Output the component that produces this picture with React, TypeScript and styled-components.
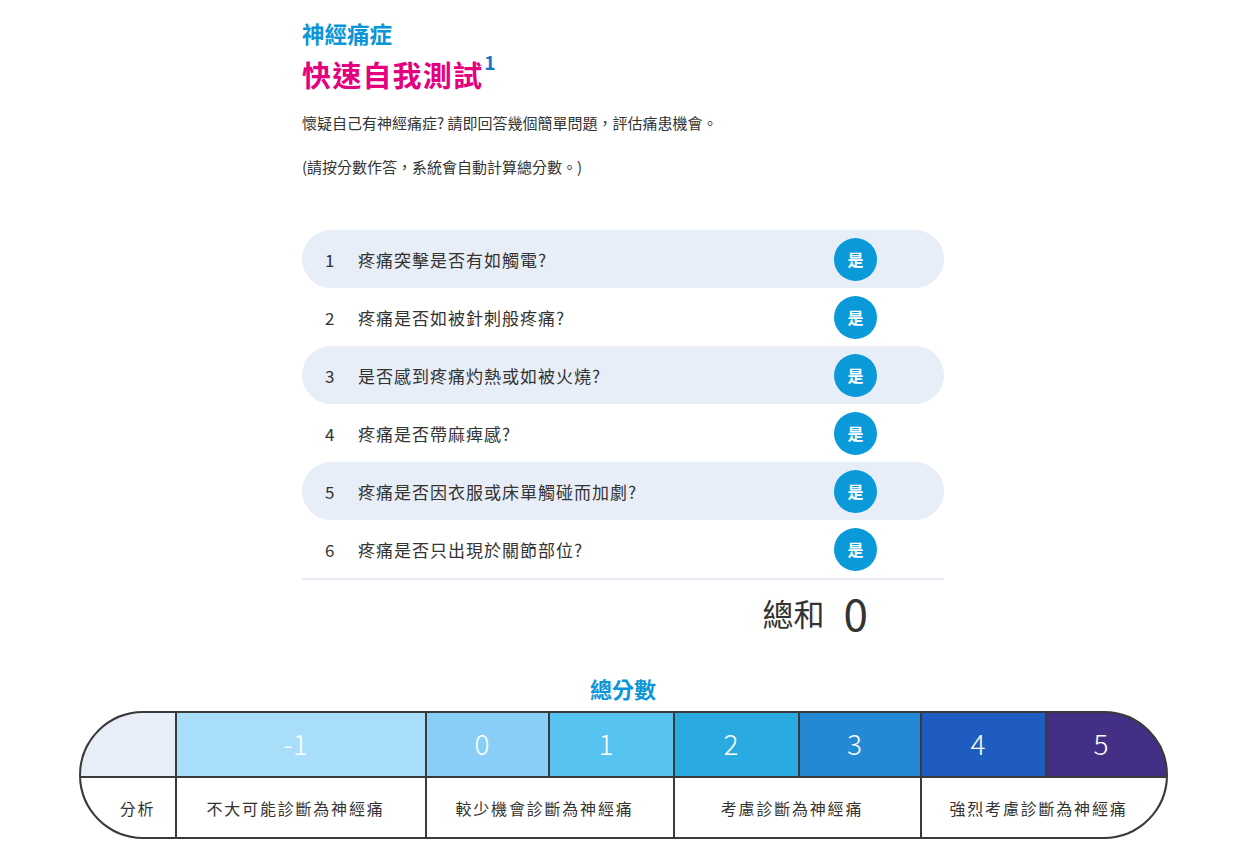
import React from "react";
import styled, { createGlobalStyle } from "styled-components";

const GlobalStyle = createGlobalStyle`
  html, body {
    margin: 0;
    padding: 0;
    background: #ffffff;
  }
  body {
    font-family: "Noto Sans CJK TC", "Noto Sans", sans-serif;
    color: #333333;
  }
`;

const Page = styled.div`
  width: 1246px;
  padding-top: 18px;
  padding-bottom: 27px;
`;

const Column = styled.div`
  width: 642px;
  margin: 0 auto;
`;

const Kicker = styled.div`
  font-size: 22.5px;
  line-height: 30px;
  font-weight: 700;
  color: #0a96d8;
`;

const Title = styled.h1`
  margin: 6px 0 0;
  font-size: 29px;
  line-height: 40px;
  font-weight: 700;
  color: #e5007f;
  letter-spacing: 1.2px;

  sup {
    font-size: 19px;
    color: #1b74c5;
    vertical-align: 17px;
    line-height: 0;
    margin-left: 1px;
  }
`;

const Para = styled.p<{ $gap: number }>`
  margin: ${(p) => p.$gap}px 0 0;
  font-size: 15px;
  line-height: 22px;
  color: #333333;
`;

const Questions = styled.div`
  margin-top: 52px;
  border-bottom: 2px solid #e6ebf4;
`;

const Row = styled.div<{ $shaded: boolean }>`
  display: flex;
  align-items: center;
  height: 58px;
  padding: 0 67px 0 23px;
  border-radius: 29px;
  background: ${(p) => (p.$shaded ? "#e8eef7" : "transparent")};
  font-size: 17px;
`;

const Num = styled.span`
  width: 33px;
`;

const Question = styled.span`
  flex: 1;
  letter-spacing: 1px;
`;

const YesButton = styled.button`
  width: 43px;
  height: 43px;
  border: none;
  border-radius: 50%;
  background: #0a9ad9;
  color: #ffffff;
  font-family: inherit;
  font-size: 16px;
  font-weight: 700;
  padding: 0;
  cursor: pointer;
`;

const Total = styled.div`
  display: flex;
  align-items: center;
  justify-content: flex-end;
  gap: 19px;
  height: 64px;
  padding-right: 76px;
`;

const TotalLabel = styled.span`
  font-size: 31px;
  color: #333333;
`;

const TotalValue = styled.span`
  font-size: 44px;
  font-weight: 400;
  line-height: 1;
  color: #333333;
`;

const ScoreHeading = styled.div`
  margin-top: 30px;
  text-align: center;
  font-size: 22px;
  line-height: 28px;
  font-weight: 700;
  color: #0a96d8;
`;

const ScoreTable = styled.div`
  margin: 9px auto 0;
  width: 1089px;
  box-sizing: border-box;
  display: grid;
  grid-template-columns: 94px 248px 121px 123px 123px 120px 123px 119px;
  grid-template-rows: 63px 59px;
  gap: 2px;
  border: 2px solid #3a3a3a;
  background: #3a3a3a;
  border-radius: 64px;
  overflow: hidden;
`;

const ScoreCell = styled.div<{ $bg: string }>`
  display: flex;
  align-items: center;
  justify-content: center;
  padding-right: 10px;
  padding-bottom: 3px;
  background: ${(p) => p.$bg};
  color: #ffffff;
  font-size: 28px;
  font-weight: 300;
`;

const LabelCell = styled.div<{ $span: number; $lead?: boolean }>`
  grid-column: span ${(p) => p.$span};
  display: flex;
  align-items: center;
  justify-content: center;
  padding: ${(p) => (p.$lead ? "0 0 0 20px" : "0 10px 0 0")};
  background: #ffffff;
  color: #333333;
  font-size: 16px;
  letter-spacing: 1.8px;
`;

const questions = [
  "疼痛突擊是否有如觸電?",
  "疼痛是否如被針刺般疼痛?",
  "是否感到疼痛灼熱或如被火燒?",
  "疼痛是否帶麻痺感?",
  "疼痛是否因衣服或床單觸碰而加劇?",
  "疼痛是否只出現於關節部位?",
];

const scores = [
  { v: "-1", bg: "#a9defb" },
  { v: "0", bg: "#88cef6" },
  { v: "1", bg: "#56c3f0" },
  { v: "2", bg: "#29abe2" },
  { v: "3", bg: "#2389d4" },
  { v: "4", bg: "#1f5cbf" },
  { v: "5", bg: "#432f86" },
];

const labels = [
  { t: "分析", span: 1 },
  { t: "不大可能診斷為神經痛", span: 1 },
  { t: "較少機會診斷為神經痛", span: 2 },
  { t: "考慮診斷為神經痛", span: 2 },
  { t: "強烈考慮診斷為神經痛", span: 2 },
];

const App: React.FC = () => {
  return (
    <Page>
      <GlobalStyle />
      <Column>
        <Kicker>神經痛症</Kicker>
        <Title>
          快速自我測試<sup>1</sup>
        </Title>
        <Para $gap={18}>懷疑自己有神經痛症? 請即回答幾個簡單問題，評估痛患機會。</Para>
        <Para $gap={22}>(請按分數作答，系統會自動計算總分數。)</Para>

        <Questions>
          {questions.map((q, i) => (
            <Row key={q} $shaded={i % 2 === 0}>
              <Num>{i + 1}</Num>
              <Question>{q}</Question>
              <YesButton>是</YesButton>
            </Row>
          ))}
        </Questions>

        <Total>
          <TotalLabel>總和</TotalLabel>
          <TotalValue>0</TotalValue>
        </Total>
      </Column>

      <ScoreHeading>總分數</ScoreHeading>
      <ScoreTable>
        <ScoreCell $bg="#e8eef7" />
        {scores.map((s) => (
          <ScoreCell key={s.v} $bg={s.bg}>
            {s.v}
          </ScoreCell>
        ))}
        {labels.map((l, i) => (
          <LabelCell key={l.t} $span={l.span} $lead={i === 0}>
            {l.t}
          </LabelCell>
        ))}
      </ScoreTable>
    </Page>
  );
};

export default App;
